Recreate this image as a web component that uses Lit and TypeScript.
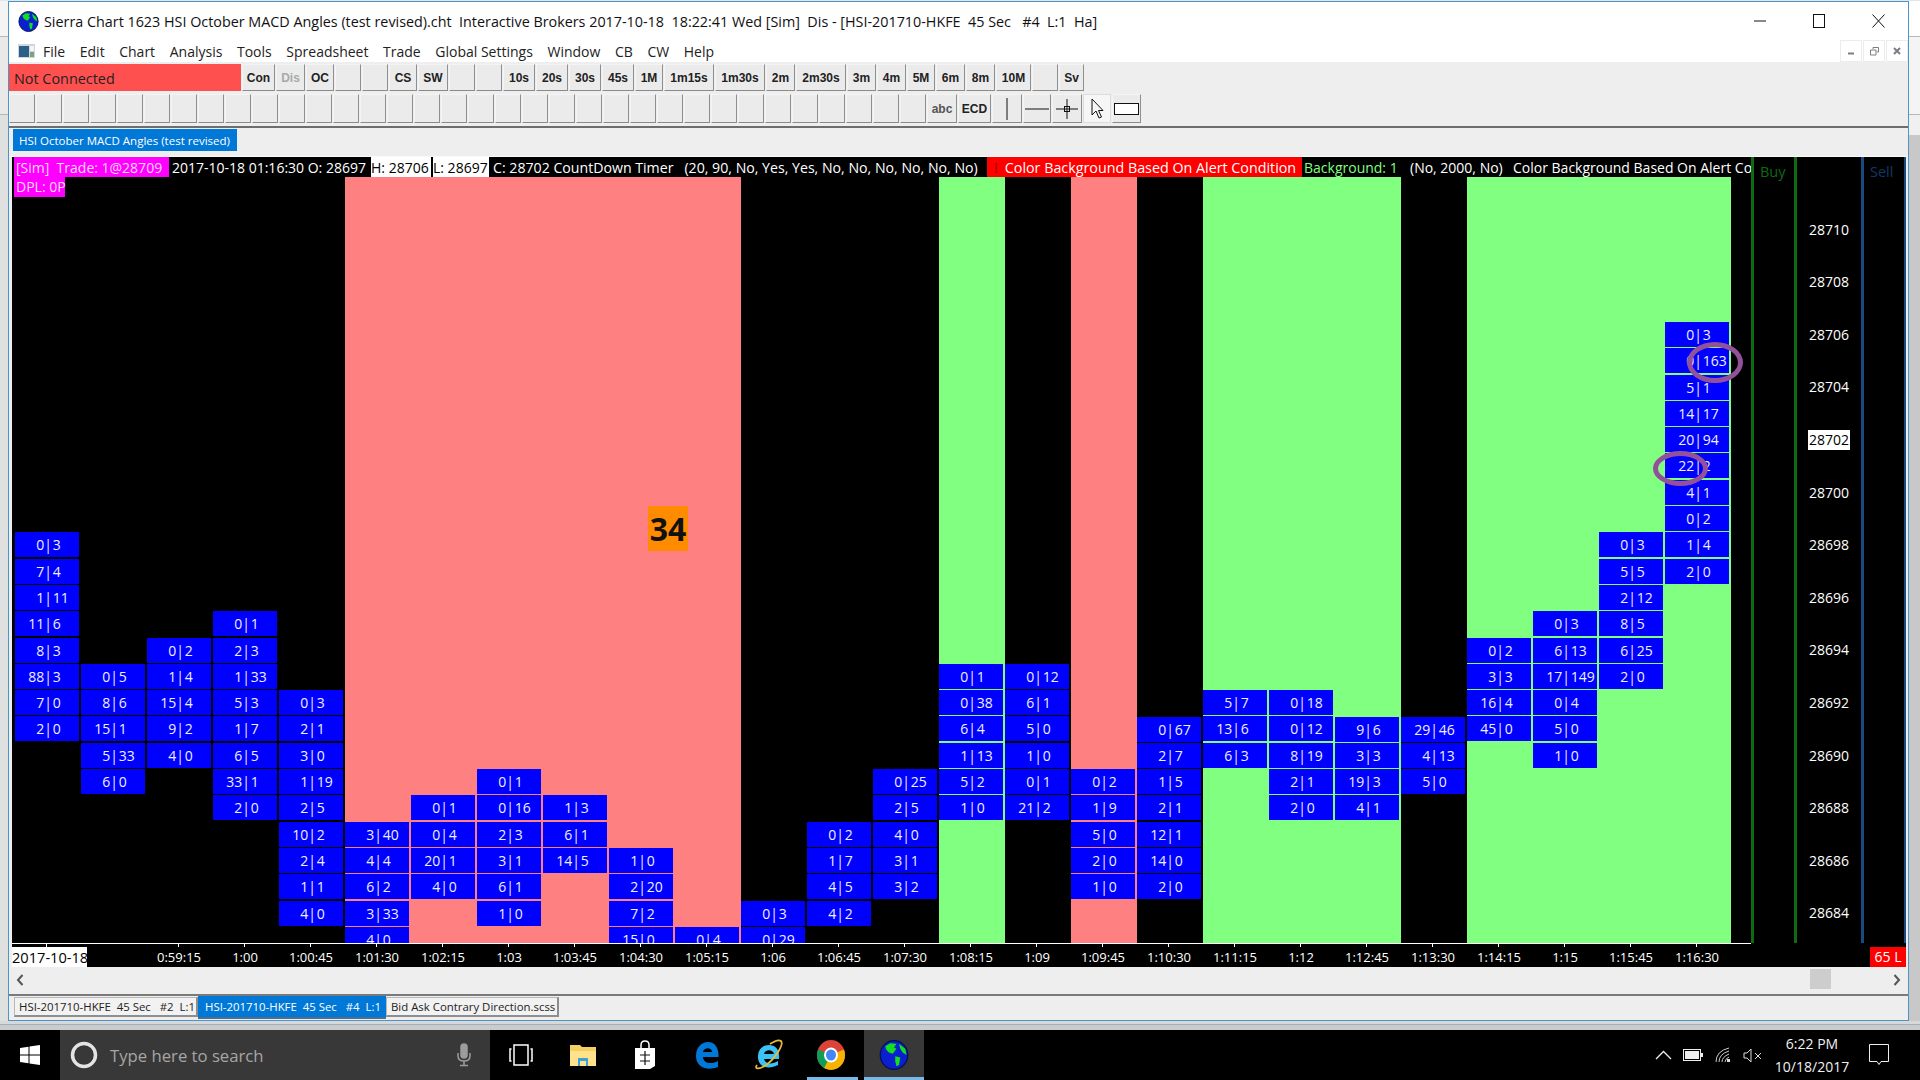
import { LitElement, html, css } from 'lit';
import { customElement } from 'lit/decorators.js';

type Band = 'black' | 'pink' | 'green';
interface Col {
  band: Band;
  top: number;
  cells: string[];
}

// price of the first cell and the bid|ask pairs going down
const COLS: Col[] = [
  { band: 'black', top: 28698, cells: ['0|3', '7|4', '1|11', '11|6', '8|3', '88|3', '7|0', '2|0'] },
  { band: 'black', top: 28693, cells: ['0|5', '8|6', '15|1', '5|33', '6|0'] },
  { band: 'black', top: 28694, cells: ['0|2', '1|4', '15|4', '9|2', '4|0'] },
  { band: 'black', top: 28695, cells: ['0|1', '2|3', '1|33', '5|3', '1|7', '6|5', '33|1', '2|0'] },
  { band: 'black', top: 28692, cells: ['0|3', '2|1', '3|0', '1|19', '2|5', '10|2', '2|4', '1|1', '4|0'] },
  { band: 'pink', top: 28687, cells: ['3|40', '4|4', '6|2', '3|33', '4|0'] },
  { band: 'pink', top: 28688, cells: ['0|1', '0|4', '20|1', '4|0'] },
  { band: 'pink', top: 28689, cells: ['0|1', '0|16', '2|3', '3|1', '6|1', '1|0'] },
  { band: 'pink', top: 28688, cells: ['1|3', '6|1', '14|5'] },
  { band: 'pink', top: 28686, cells: ['1|0', '2|20', '7|2', '15|0'] },
  { band: 'pink', top: 28683, cells: ['0|4'] },
  { band: 'black', top: 28684, cells: ['0|3', '0|29'] },
  { band: 'black', top: 28687, cells: ['0|2', '1|7', '4|5', '4|2'] },
  { band: 'black', top: 28689, cells: ['0|25', '2|5', '4|0', '3|1', '3|2'] },
  { band: 'green', top: 28693, cells: ['0|1', '0|38', '6|4', '1|13', '5|2', '1|0'] },
  { band: 'black', top: 28693, cells: ['0|12', '6|1', '5|0', '1|0', '0|1', '21|2'] },
  { band: 'pink', top: 28689, cells: ['0|2', '1|9', '5|0', '2|0', '1|0'] },
  { band: 'black', top: 28691, cells: ['0|67', '2|7', '1|5', '2|1', '12|1', '14|0', '2|0'] },
  { band: 'green', top: 28692, cells: ['5|7', '13|6', '6|3'] },
  { band: 'green', top: 28692, cells: ['0|18', '0|12', '8|19', '2|1', '2|0'] },
  { band: 'green', top: 28691, cells: ['9|6', '3|3', '19|3', '4|1'] },
  { band: 'black', top: 28691, cells: ['29|46', '4|13', '5|0'] },
  { band: 'green', top: 28694, cells: ['0|2', '3|3', '16|4', '45|0'] },
  { band: 'green', top: 28695, cells: ['0|3', '6|13', '17|149', '0|4', '5|0', '1|0'] },
  { band: 'green', top: 28698, cells: ['0|3', '5|5', '2|12', '8|5', '6|25', '2|0'] },
  { band: 'green', top: 28706, cells: ['0|3', '0|163', '5|1', '14|17', '20|94', '22|2', '4|1', '0|2', '1|4', '2|0'] },
];

const TIMES = ['', '', '0:59:15', '1:00', '1:00:45', '1:01:30', '1:02:15', '1:03', '1:03:45', '1:04:30', '1:05:15', '1:06',
  '1:06:45', '1:07:30', '1:08:15', '1:09', '1:09:45', '1:10:30', '1:11:15', '1:12', '1:12:45', '1:13:30', '1:14:15',
  '1:15', '1:15:45', '1:16:30'];

const PRICES = [28710, 28708, 28706, 28704, 28702, 28700, 28698, 28696, 28694, 28692, 28690, 28688, 28686, 28684];

const MENU = ['File', 'Edit', 'Chart', 'Analysis', 'Tools', 'Spreadsheet', 'Trade', 'Global Settings', 'Window', 'CB', 'CW', 'Help'];

const TOOLS: [string, number][] = [
  ['Con', 33], ['Dis', 29], ['OC', 28], ['', 26], ['', 26], ['CS', 28], ['SW', 30], ['', 26], ['', 26],
  ['10s', 32], ['20s', 32], ['30s', 32], ['45s', 32], ['1M', 28], ['1m15s', 50], ['1m30s', 50], ['2m', 29],
  ['2m30s', 50], ['3m', 29], ['4m', 29], ['5M', 28], ['6m', 29], ['8m', 29], ['10M', 35], ['', 26], ['Sv', 25],
];

const ROW_PITCH = 26.3;
const PLOT_TOP = 177;
const rowTop = (price: number) => 322 + (28706 - price) * ROW_PITCH - PLOT_TOP;

const globe = (size: number) => html`<svg width=${size} height=${size} viewBox="0 0 24 24">
  <ellipse cx="12" cy="12" rx="11" ry="11.5" fill="#0a1fd0" stroke="#04104f" stroke-width="1"/>
  <path d="M5 5 9 2.5 14 3 12 6 14 7 11 11 8 10 6 8Z" fill="#12e01a"/>
  <path d="M13 13 17 14 16 20 14 21 13 17Z" fill="#12e01a"/>
  <path d="M16 3 21 7 22 12 19 10 17 7Z" fill="#12e01a"/>
</svg>`;

@customElement('app-root')
export class AppRoot extends LitElement {
  static styles = css`
    :host {
      display: block;
      width: 1920px;
      height: 1080px;
      overflow: hidden;
      background: #e4e5e6;
      font-family: "Open Sans", "Liberation Sans", sans-serif;
    }

    .desk {
      display: flex;
      height: 1021px;
      padding-top: 1px;
      box-sizing: border-box;
    }
    .desk-left {
      width: 8px;
      background: linear-gradient(#f4f4f4 0 35px, #b8b8b8 35px 36px, #e9e9e9 36px 113px, #b8b8b8 113px 114px, #dfe0e0 114px);
    }
    .desk-right {
      flex: 1;
      background: linear-gradient(#fff 0 35px, #b8b8b8 35px 36px, #f4f4f4 36px 113px, #b8b8b8 113px 114px, #f0f0f0 114px 134px, #c8c8c8 134px);
    }
    .under {
      height: 9px;
      background: linear-gradient(#d6d8da 0 3px, #9fb0bf 3px 4px, #c9cbcd 4px);
    }

    .win {
      width: 1901px;
      box-sizing: border-box;
      border: 1px solid #4f94c9;
      background: #eeeeee;
      display: flex;
      flex-direction: column;
    }

    .title {
      height: 38px;
      background: #fff;
      display: flex;
      align-items: center;
      font-size: 14.35px;
      color: #111;
      white-space: pre;
    }
    .logo {
      margin-left: 9px;
      margin-right: 5px;
      display: flex;
      flex: none;
    }
    .caps {
      margin-left: auto;
      display: flex;
    }
    .cap {
      width: 58px;
      height: 38px;
      display: flex;
      align-items: center;
      justify-content: center;
      margin-right: 1px;
    }

    .menu {
      height: 22px;
      background: #fff;
      display: flex;
      align-items: center;
      font-size: 14px;
      color: #222;
    }
    .menu-icon {
      margin-left: 9px;
      margin-right: 8px;
      flex: none;
    }
    .menu-item {
      margin-right: 14.6px;
    }
    .mdi {
      margin-left: auto;
      display: flex;
      gap: 1px;
      align-self: flex-start;
    }
    .mdi-btn {
      width: 22px;
      height: 22px;
      box-sizing: border-box;
      border: 1px solid #ececec;
      display: flex;
      align-items: center;
      justify-content: center;
      background: #fff;
    }

    .toolbars {
      height: 66px;
      box-sizing: border-box;
      padding-top: 2px;
      border-bottom: 2px solid #6d6d6d;
      display: flex;
      flex-direction: column;
      gap: 3px;
    }
    .row {
      display: flex;
      gap: 1px;
    }
    .row-1 {
      height: 27px;
    }
    .row-2 {
      height: 29px;
    }
    .not-conn {
      width: 232px;
      background: #ff5050;
      color: #222;
      font-size: 14.4px;
      display: flex;
      align-items: center;
      padding: 1px 0 0 5px;
      box-sizing: border-box;
    }
    .btn {
      box-sizing: border-box;
      background: #ebebeb;
      border: 1px solid #f4f4f4;
      border-right-color: #8f8f8f;
      border-bottom-color: #8a8a8a;
      display: flex;
      align-items: center;
      justify-content: center;
      font: bold 12px "Liberation Sans", sans-serif;
      color: #222;
    }
    .btn.off {
      color: #a9a9a9;
    }
    .btn.narrow {
      width: 26px;
    }
    .btn.abc {
      width: 30px;
      color: #555;
    }
    .btn.ecd {
      width: 33px;
    }
    .btn.w30 {
      width: 30px;
    }
    .btn.w28 {
      width: 28px;
    }
    .btn.w29 {
      width: 29px;
    }
    .btn.on {
      background: #f6f6f6;
      border-color: #dcdcdc;
    }

    .tabband {
      height: 29px;
      flex: none;
      box-sizing: border-box;
      padding: 1px 0 0 4px;
      border-bottom: 1px solid #fafafa;
    }
    .doc-tab {
      width: 224px;
      height: 22px;
      background: #0078d7;
      color: #fff;
      font-size: 11.5px;
      display: flex;
      align-items: center;
      padding-left: 6px;
      box-sizing: border-box;
      white-space: nowrap;
    }

    .chart {
      margin: 0 2px 0 3px;
      height: 810px;
      background: #000;
      display: grid;
      grid-template-columns: 1739px 155px;
      grid-template-rows: 786px 24px;
      color: #fff;
    }
    .main {
      overflow: hidden;
      display: flex;
      flex-direction: column;
      position: relative;
    }

    .strip {
      height: 20px;
      flex: none;
      display: flex;
      font-size: 14px;
      line-height: 22px;
      white-space: pre;
      overflow: hidden;
    }
    .seg {
      flex: none;
      overflow: hidden;
    }
    .s-trade {
      width: 155px;
      margin-left: 2px;
      margin-right: 3px;
      background: #ff00ff;
      color: #ffd8ff;
      padding-left: 2px;
      box-sizing: border-box;
    }
    .s-ohl {
      width: 199px;
    }
    .s-h {
      width: 60px;
      background: #fff;
      color: #000;
      margin-right: 2px;
    }
    .s-l {
      width: 56px;
      background: #fff;
      color: #000;
    }
    .s-c {
      width: 498px;
      padding-left: 4px;
      box-sizing: border-box;
      font-size: 14.15px;
    }
    .s-alert {
      width: 315px;
      background: #ff0000;
      padding-left: 7px;
      box-sizing: border-box;
      font-size: 14.3px;
    }
    .s-alert i {
      font-style: normal;
      color: #a00000;
      margin-right: 7px;
    }
    .s-bg {
      width: 106px;
      margin-left: 2px;
      color: #80ff80;
    }
    .s-args {
      width: 103px;
    }
    .dpl {
      position: absolute;
      left: 2px;
      top: 20px;
      height: 20px;
      width: 51px;
      background: #ff00ff;
      color: #ffd8ff;
      font-size: 14px;
      line-height: 20px;
      padding-left: 2px;
      box-sizing: border-box;
      white-space: nowrap;
      z-index: 2;
    }

    .plot {
      flex: 1;
      display: flex;
      padding-left: 3px;
      overflow: hidden;
      position: relative;
    }
    .col {
      width: 66px;
      flex: none;
      display: flex;
      flex-direction: column;
      gap: 1.3px;
      padding-right: 2px;
      box-sizing: border-box;
    }
    .col.pink {
      background: #ff8080;
    }
    .col.green {
      background: #80ff80;
    }
    .cell {
      height: 25px;
      flex: none;
      background: #0000ff;
      color: #eef0ff;
      font-size: 14px;
      line-height: 25px;
      display: grid;
      grid-template-columns: 1fr auto 1fr;
      padding-left: 3px;
    }
    .cell b {
      font-weight: 400;
      text-align: right;
    }
    .cell u {
      text-decoration: none;
      padding-right: 1px;
    }
    .cell em {
      font-style: normal;
    }

    .badge {
      position: absolute;
      left: 636px;
      top: 329px;
      width: 40px;
      height: 45px;
      background: #ff8c00;
      color: #111;
      font: bold 32px/45px "Open Sans", sans-serif;
      text-align: center;
    }
    .ring {
      position: absolute;
      box-sizing: border-box;
      border: 5px solid #93509b;
      border-radius: 50%;
    }
    .ring-a {
      left: 1675px;
      top: 165px;
      width: 56px;
      height: 41px;
    }
    .ring-b {
      left: 1641px;
      top: 274px;
      width: 55px;
      height: 35px;
    }

    .side {
      display: grid;
      grid-template-columns: 43px 67px 45px;
      width: 155px;
      box-sizing: border-box;
    }
    .lane {
      border-left: 3px solid #0e6b12;
      font-size: 14.5px;
      padding: 5px 0 0 6px;
      color: #0e6b12;
      box-sizing: border-box;
    }
    .lane.scale {
      color: #fff;
      font-size: 14px;
      display: flex;
      flex-direction: column;
      align-items: center;
      padding: 46.4px 0 0;
    }
    .lane.sell {
      border-left-color: #1a4a80;
      border-right: 2px solid #1a4a80;
      color: #12386b;
      padding-left: 6px;
    }
    .tick-label {
      height: 52.6px;
      flex: none;
      display: flex;
      align-items: center;
    }
    .tick-label span {
      padding: 0 1px;
      line-height: 20px;
    }
    .tick-label.now span {
      background: #fff;
      color: #000;
    }

    .axis {
      border-top: 1px solid #fff;
      display: flex;
      padding-left: 3px;
      position: relative;
      height: 24px;
      box-sizing: border-box;
    }
    .time {
      width: 66px;
      flex: none;
      font-size: 13px;
      text-align: center;
      line-height: 26px;
      position: relative;
      padding-right: 2px;
      box-sizing: border-box;
    }
    .time.mark::before {
      content: '';
      position: absolute;
      left: 31px;
      top: 0;
      width: 1px;
      height: 3px;
      background: #fff;
    }
    .date {
      position: absolute;
      left: 0;
      top: 3px;
      width: 75px;
      height: 20px;
      background: #fff;
      color: #000;
      font-size: 14.6px;
      line-height: 20px;
      white-space: nowrap;
      overflow: hidden;
      text-align: right;
      direction: rtl;
      unicode-bidi: plaintext;
    }
    .axis-side {
      display: flex;
      justify-content: flex-end;
      align-items: flex-end;
    }
    .loss {
      width: 36px;
      height: 20px;
      background: #ff0000;
      color: #fff;
      font-size: 14px;
      line-height: 20px;
      text-align: center;
    }

    .scroll {
      height: 29px;
      flex: none;
      display: flex;
      align-items: center;
      justify-content: space-between;
      padding: 0 7px 2px;
      box-sizing: border-box;
      position: relative;
      border-bottom: 2px solid #7a7a7a;
    }
    .thumb {
      position: absolute;
      left: 1801px;
      top: 2px;
      width: 21px;
      height: 20px;
      background: #cdcdcd;
    }

    .sheets {
      flex: 1;
      display: flex;
      align-items: flex-start;
      padding-left: 5px;
      font-size: 11.4px;
      white-space: pre;
    }
    .sheet {
      height: 20px;
      margin-top: 1px;
      box-sizing: border-box;
      border: 1px solid #b8b8b8;
      border-bottom: 2px solid #8e8e8e;
      border-right: 2px solid #8e8e8e;
      background: #f2f2f2;
      color: #222;
      display: flex;
      align-items: center;
      padding-left: 4px;
    }
    .sheet.active {
      height: 24px;
      margin-top: -1px;
      background: #0078d7;
      color: #fff;
      border: none;
      border-bottom: 2px solid #4a6f90;
      padding-left: 7px;
      width: 188px;
    }
    .sheet.one {
      width: 184px;
    }
    .sheet.three {
      width: 173px;
    }

    .taskbar {
      height: 50px;
      background: #000;
      display: flex;
      align-items: stretch;
      color: #fff;
    }
    .start {
      width: 60px;
      display: flex;
      align-items: center;
      justify-content: center;
    }
    .search {
      width: 430px;
      background: #383838;
      display: flex;
      align-items: center;
      color: #a6a6a6;
      font-size: 16.7px;
    }
    .search .cortana {
      margin: 0 12px 0 10px;
    }
    .search .mic {
      margin-left: auto;
      margin-right: 18px;
    }
    .task {
      width: 62px;
      flex: none;
      display: flex;
      align-items: center;
      justify-content: center;
      position: relative;
    }
    .task.open::after,
    .task.active::after {
      content: '';
      position: absolute;
      bottom: 0;
      height: 3px;
      background: #76b9ed;
      left: 7px;
      right: 4px;
    }
    .task.active {
      background: #383838;
      width: 60px;
      margin-left: 2px;
    }
    .task.active::after {
      left: 0;
      right: 0;
    }
    .tray {
      margin-left: auto;
      display: flex;
      align-items: center;
      margin-right: 18px;
    }
    .tray-icon {
      width: 30px;
      display: flex;
      justify-content: center;
    }
    .clock {
      width: 88px;
      text-align: center;
      font-size: 14px;
      line-height: 23px;
      color: #f0f0f0;
    }
    .notif {
      width: 46px;
      display: flex;
      justify-content: center;
    }
  `;

  private renderCell(pair: string) {
    const [bid, ask] = pair.split('|');
    return html`<div class="cell"><b>${bid}</b><u>|</u><em>${ask}</em></div>`;
  }

  private renderPlot() {
    return html`<div class="plot">
      ${COLS.map(
        (c) => html`<div class="col ${c.band}" style="padding-top:${rowTop(c.top).toFixed(1)}px">
          ${c.cells.map((p) => this.renderCell(p))}
        </div>`
      )}
      <div class="badge">34</div>
      <div class="ring ring-a"></div>
      <div class="ring ring-b"></div>
    </div>`;
  }

  private renderStrip() {
    return html`<div class="strip">
      <div class="seg s-trade">[Sim]  Trade: 1@28709</div>
      <div class="seg s-ohl">2017-10-18 01:16:30 O: 28697</div>
      <div class="seg s-h">H: 28706</div>
      <div class="seg s-l">L: 28697</div>
      <div class="seg s-c">C: 28702 CountDown Timer   (20, 90, No, Yes, Yes, No, No, No, No, No, No)</div>
      <div class="seg s-alert"><i>!</i>Color Background Based On Alert Condition</div>
      <div class="seg s-bg">Background: 1</div>
      <div class="seg s-args">(No, 2000, No)</div>
      <div class="seg">Color Background Based On Alert Condition</div>
    </div>`;
  }

  private renderSide() {
    return html`<div class="side">
      <div class="lane">Buy</div>
      <div class="lane scale">
        ${PRICES.map((p) => html`<div class="tick-label ${p === 28702 ? 'now' : ''}"><span>${p}</span></div>`)}
      </div>
      <div class="lane sell">Sell</div>
    </div>`;
  }

  private renderAxis() {
    return html`<div class="axis">
      <div class="time mark"></div>
      ${TIMES.slice(1).map((t) => html`<div class="time ${t ? 'mark' : ''}">${t}</div>`)}
      <div class="date">2017-10-18</div>
    </div>
    <div class="axis-side"><div class="loss">65 L</div></div>`;
  }

  private renderToolbars() {
    return html`<div class="toolbars">
      <div class="row row-1">
        <div class="not-conn">Not Connected</div>
        ${TOOLS.map(
          ([t, w]) => html`<div class="btn ${t === 'Dis' ? 'off' : ''}" style="width:${w}px">${t}</div>`
        )}
      </div>
      <div class="row row-2">
        ${Array.from({ length: 34 }, () => html`<div class="btn narrow"></div>`)}
        <div class="btn abc">abc</div>
        <div class="btn ecd">ECD</div>
        <div class="btn w30">
          <svg width="12" height="24" viewBox="0 0 12 24"><path d="M6 1V23" stroke="#111"/></svg>
        </div>
        <div class="btn w28">
          <svg width="24" height="12" viewBox="0 0 24 12"><path d="M0 6H24" stroke="#111"/></svg>
        </div>
        <div class="btn w30">
          <svg width="26" height="24" viewBox="0 0 26 24">
            <path d="M2 12H24M13 2V22" stroke="#111"/><rect x="10.5" y="9.5" width="5" height="5" fill="none" stroke="#111"/>
          </svg>
        </div>
        <div class="btn w28 on">
          <svg width="14" height="22" viewBox="0 0 14 22">
            <path d="M2 1V17L6 13 9 20 11.5 19 8.5 12.5 13 12.5Z" fill="#f6f6f6" stroke="#111" stroke-width="1"/>
          </svg>
        </div>
        <div class="btn w29">
          <svg width="25" height="12" viewBox="0 0 25 12"><rect x=".5" y=".5" width="24" height="11" fill="#fff" stroke="#111"/></svg>
        </div>
      </div>
    </div>`;
  }

  private renderTitle() {
    return html`<div class="title">
      <span class="logo">${globe(21)}</span>
      <span>Sierra Chart 1623 HSI October MACD Angles (test revised).cht  Interactive Brokers 2017-10-18  18:22:41 Wed [Sim]  Dis - [HSI-201710-HKFE  45 Sec   #4  L:1  Ha]</span>
      <div class="caps">
        <div class="cap"><svg width="12" height="12" viewBox="0 0 12 12"><path d="M0 6H12" stroke="#111"/></svg></div>
        <div class="cap"><svg width="12" height="14" viewBox="0 0 12 14"><rect x=".5" y=".5" width="11" height="13" fill="none" stroke="#111"/></svg></div>
        <div class="cap"><svg width="13" height="14" viewBox="0 0 13 14"><path d="M.5 .5 12.5 13.5M12.5 .5 .5 13.5" stroke="#111"/></svg></div>
      </div>
    </div>
    <div class="menu">
      <svg class="menu-icon" width="17" height="14" viewBox="0 0 17 14">
        <rect width="17" height="14" fill="#cfd6dc"/><rect x="1" y="2" width="10" height="11" fill="#2b5f88"/>
        <rect x="12" y="2" width="4" height="5" fill="#f4f4f4"/><rect x="12" y="8" width="4" height="5" fill="#7ca37c"/>
      </svg>
      ${MENU.map((m) => html`<span class="menu-item">${m}</span>`)}
      <div class="mdi">
        <div class="mdi-btn"><svg width="8" height="8" viewBox="0 0 8 8"><path d="M1 6.5H7" stroke="#7a7f85" stroke-width="2"/></svg></div>
        <div class="mdi-btn"><svg width="9" height="9" viewBox="0 0 9 9"><path d="M3 2V.5H8.5V5H7M.5 3H6V8H.5Z" fill="none" stroke="#7a7f85"/></svg></div>
        <div class="mdi-btn"><svg width="8" height="8" viewBox="0 0 8 8"><path d="M1 1 7 7M7 1 1 7" stroke="#7a7f85" stroke-width="2"/></svg></div>
      </div>
    </div>`;
  }

  private renderTaskbar() {
    return html`<div class="taskbar">
      <div class="start">
        <svg width="20" height="20" viewBox="0 0 20 20"><path d="M0 3 8.5 1.7V9.5H0ZM9.5 1.5 20 0V9.5H9.5ZM0 10.5H8.5V18.3L0 17ZM9.5 10.5H20V20L9.5 18.5Z" fill="#fff"/></svg>
      </div>
      <div class="search">
        <svg class="cortana" width="28" height="28" viewBox="0 0 28 28"><circle cx="14" cy="14" r="11.5" fill="none" stroke="#e4e4e4" stroke-width="3.5"/></svg>
        Type here to search
        <svg class="mic" width="16" height="24" viewBox="0 0 16 24" fill="none" stroke="#9c9c9c" stroke-width="1.5">
          <rect x="5" y="1" width="6" height="14" rx="3" fill="#9c9c9c"/><path d="M2 10V13Q2 18 8 18 14 18 14 13V10M8 18V22M4 22.5H12"/>
        </svg>
      </div>
      <div class="task">
        <svg width="24" height="22" viewBox="0 0 24 22" fill="none" stroke="#fff" stroke-width="1.5">
          <rect x="5" y="1" width="14" height="20"/><path d="M2.5 5H1V17H2.5M21.5 5H23V17H21.5"/>
        </svg>
      </div>
      <div class="task">
        <svg width="28" height="24" viewBox="0 0 28 24">
          <path d="M1 2H11L13 4H27V23H1Z" fill="#f5d05f"/><path d="M1 8H27V23H1Z" fill="#ffe38c"/>
          <path d="M9 15H19V23H17V18H11V23H9Z" fill="#3e9fd6"/>
        </svg>
      </div>
      <div class="task">
        <svg width="22" height="30" viewBox="0 0 22 30">
          <path d="M1 8H21V26L16 29H1Z" fill="#fff"/><path d="M7 8V5Q7 1 11 1 15 1 15 5V8" fill="none" stroke="#fff" stroke-width="1.5"/>
          <path d="M6 15H16M6 21H16M11 11V25" stroke="#111" stroke-width="1.2"/>
        </svg>
      </div>
      <div class="task">
        <svg width="26" height="30" viewBox="0 0 26 30"><path d="M2 16C2 7 8 2 14 2 21 2 25 8 24.5 17H9C9 23 17 25 24 21V27C14 31 2 28 2 16ZM9 12H18C18 7 10 7 9 12Z" fill="#0078d7"/></svg>
      </div>
      <div class="task">
        <svg width="30" height="32" viewBox="0 0 30 32">
          <path d="M4 18C4 10 9 6 15 6 21 6 26 10 25 20H10C11 25 18 26 24 22V26C14 31 4 28 4 18ZM10 15H20C19 10 11 10 10 15Z" fill="#3cc3f5"/>
          <path d="M3 26C0 30 5 31 12 26 22 19 30 5 27 2 24 0 19 3 16 5" fill="none" stroke="#e8b93a" stroke-width="1.8"/>
        </svg>
      </div>
      <div class="task open">
        <svg width="28" height="30" viewBox="0 0 28 30">
          <clipPath id="cc"><ellipse cx="14" cy="15" rx="14" ry="15"/></clipPath>
          <g clip-path="url(#cc)">
            <rect width="28" height="30" fill="#db4437"/><path d="M14 15 0 9V30H10Z" fill="#0f9d58"/><path d="M14 15 28 9V30H6Z" fill="#f4b400"/>
          </g>
          <ellipse cx="14" cy="15" rx="7" ry="7.5" fill="#fff"/><ellipse cx="14" cy="15" rx="5" ry="5.5" fill="#4285f4"/>
        </svg>
      </div>
      <div class="task active">${globe(30)}</div>
      <div class="tray">
        <div class="tray-icon"><svg width="17" height="10" viewBox="0 0 17 10"><path d="M1 9 8.5 1.5 16 9" fill="none" stroke="#eee" stroke-width="1.3"/></svg></div>
        <div class="tray-icon"><svg width="20" height="12" viewBox="0 0 20 12"><rect x=".5" y=".5" width="17" height="11" fill="none" stroke="#eee"/><rect x="2" y="2" width="14" height="8" fill="#eee"/><rect x="18" y="4" width="2" height="4" fill="#eee"/></svg></div>
        <div class="tray-icon"><svg width="16" height="16" viewBox="0 0 16 16" fill="none" stroke="#ccc"><path d="M1 15Q1 4 14 1M4 15Q4 7 14 4M7 15Q7 10 14 7M10 15Q10 12 14 10"/><rect x="12" y="12" width="3" height="3" fill="#ddd" stroke="none"/></svg></div>
        <div class="tray-icon"><svg width="20" height="15" viewBox="0 0 20 15" fill="none" stroke="#ddd"><path d="M1 5H4L8 1V14L4 10H1Z"/><path d="M12 5 18 11M18 5 12 11"/></svg></div>
        <div class="clock">6:22 PM<br />10/18/2017</div>
        <div class="notif"><svg width="20" height="22" viewBox="0 0 20 22"><path d="M.5 .5H19.5V17.5H12L10 20.5 8 17.5H.5Z" fill="none" stroke="#eee"/></svg></div>
      </div>
    </div>`;
  }

  render() {
    return html`
      <div class="desk">
        <div class="desk-left"></div>
        <div class="win">
          ${this.renderTitle()}
          ${this.renderToolbars()}
          <div class="tabband"><div class="doc-tab">HSI October MACD Angles (test revised)</div></div>
          <div class="chart">
            <div class="main">
              ${this.renderStrip()}
              ${this.renderPlot()}
              <div class="dpl">DPL: 0P</div>
            </div>
            ${this.renderSide()}
            ${this.renderAxis()}
          </div>
          <div class="scroll">
            <svg width="8" height="12" viewBox="0 0 8 12"><path d="M6.5 1 2 6 6.5 11" fill="none" stroke="#555" stroke-width="2"/></svg>
            <svg width="8" height="12" viewBox="0 0 8 12"><path d="M1.5 1 6 6 1.5 11" fill="none" stroke="#555" stroke-width="2"/></svg>
            <div class="thumb"></div>
          </div>
          <div class="sheets">
            <div class="sheet one">HSI-201710-HKFE  45 Sec   #2  L:1</div>
            <div class="sheet active">HSI-201710-HKFE  45 Sec   #4  L:1</div>
            <div class="sheet three">Bid Ask Contrary Direction.scss</div>
          </div>
        </div>
        <div class="desk-right"></div>
      </div>
      <div class="under"></div>
      ${this.renderTaskbar()}
    `;
  }
}

declare global {
  interface HTMLElementTagNameMap {
    'app-root': AppRoot;
  }
}
